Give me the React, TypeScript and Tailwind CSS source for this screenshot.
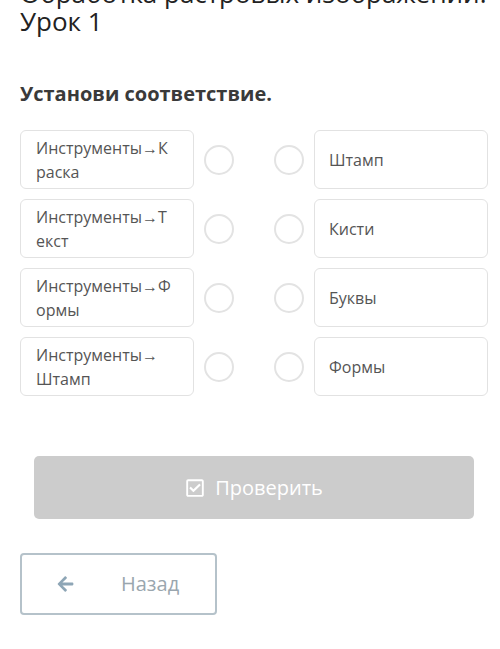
import { FaArrowLeft, FaRegCheckSquare } from 'react-icons/fa';

const rows = [
  { left: 'Инструменты→Краска', right: 'Штамп' },
  { left: 'Инструменты→Текст', right: 'Кисти' },
  { left: 'Инструменты→Формы', right: 'Буквы' },
  { left: 'Инструменты→\nШтамп', right: 'Формы' },
];

function Circle() {
  return <div className="w-[30px] h-[30px] shrink-0 rounded-full border-2 border-[#e3e3e3] bg-white" />;
}

export default function App() {
  return (
    <div className="w-[500px] h-[649px] overflow-hidden bg-white font-['Open_Sans',sans-serif]">
      {/* Lesson title, scrolled partly out of view */}
      <h1 className="-mt-[21px] pl-5 pr-[4px] text-[26px] leading-[28px] text-[#222] whitespace-nowrap">
        Обработка растровых изображений.
        <br />
        Урок 1
      </h1>

      <h2 className="mt-[45px] px-5 text-[20px] leading-[28px] font-bold text-[#3a3a3a]">
        Установи соответствие.
      </h2>

      {/* Matching rows */}
      <div className="mt-[22px] flex flex-col gap-[10px] pl-5">
        {rows.map((row) => (
          <div key={row.right} className="flex items-stretch">
            <div className="w-[174px] min-h-[59px] rounded-md border border-[#e2e2e2] bg-white pl-[15px] pr-[18px] pt-[5px] pb-[4px] text-[16px] leading-[24px] text-[#555] break-all whitespace-pre-line">
              {row.left}
            </div>
            <div className="ml-[10px] flex items-center">
              <Circle />
            </div>
            <div className="ml-[40px] flex items-center">
              <Circle />
            </div>
            <div className="ml-[10px] w-[174px] flex items-center rounded-md border border-[#e2e2e2] bg-white pl-[14px] text-[16px] leading-[24px] text-[#555]">
              {row.right}
            </div>
          </div>
        ))}
      </div>

      {/* Check button */}
      <div className="mt-[60px] px-[34px]">
        <button className="w-[440px] h-[63px] flex items-center justify-center gap-[10px] rounded-[5px] bg-[#cccccc] text-white text-[20px]">
          <FaRegCheckSquare className="w-[20px] h-[20px]" />
          <span>Проверить</span>
        </button>
      </div>

      {/* Back button */}
      <div className="mt-[34px] px-5">
        <button className="w-[197px] h-[62px] flex items-center rounded-[4px] border-2 border-[#b5c2ca] bg-white text-[20px] text-[#9aa6ae]">
          <FaArrowLeft className="ml-[33px] w-[21px] h-[18px] text-[#8ea6b6]" />
          <span className="ml-[45px]">Назад</span>
        </button>
      </div>
    </div>
  );
}
